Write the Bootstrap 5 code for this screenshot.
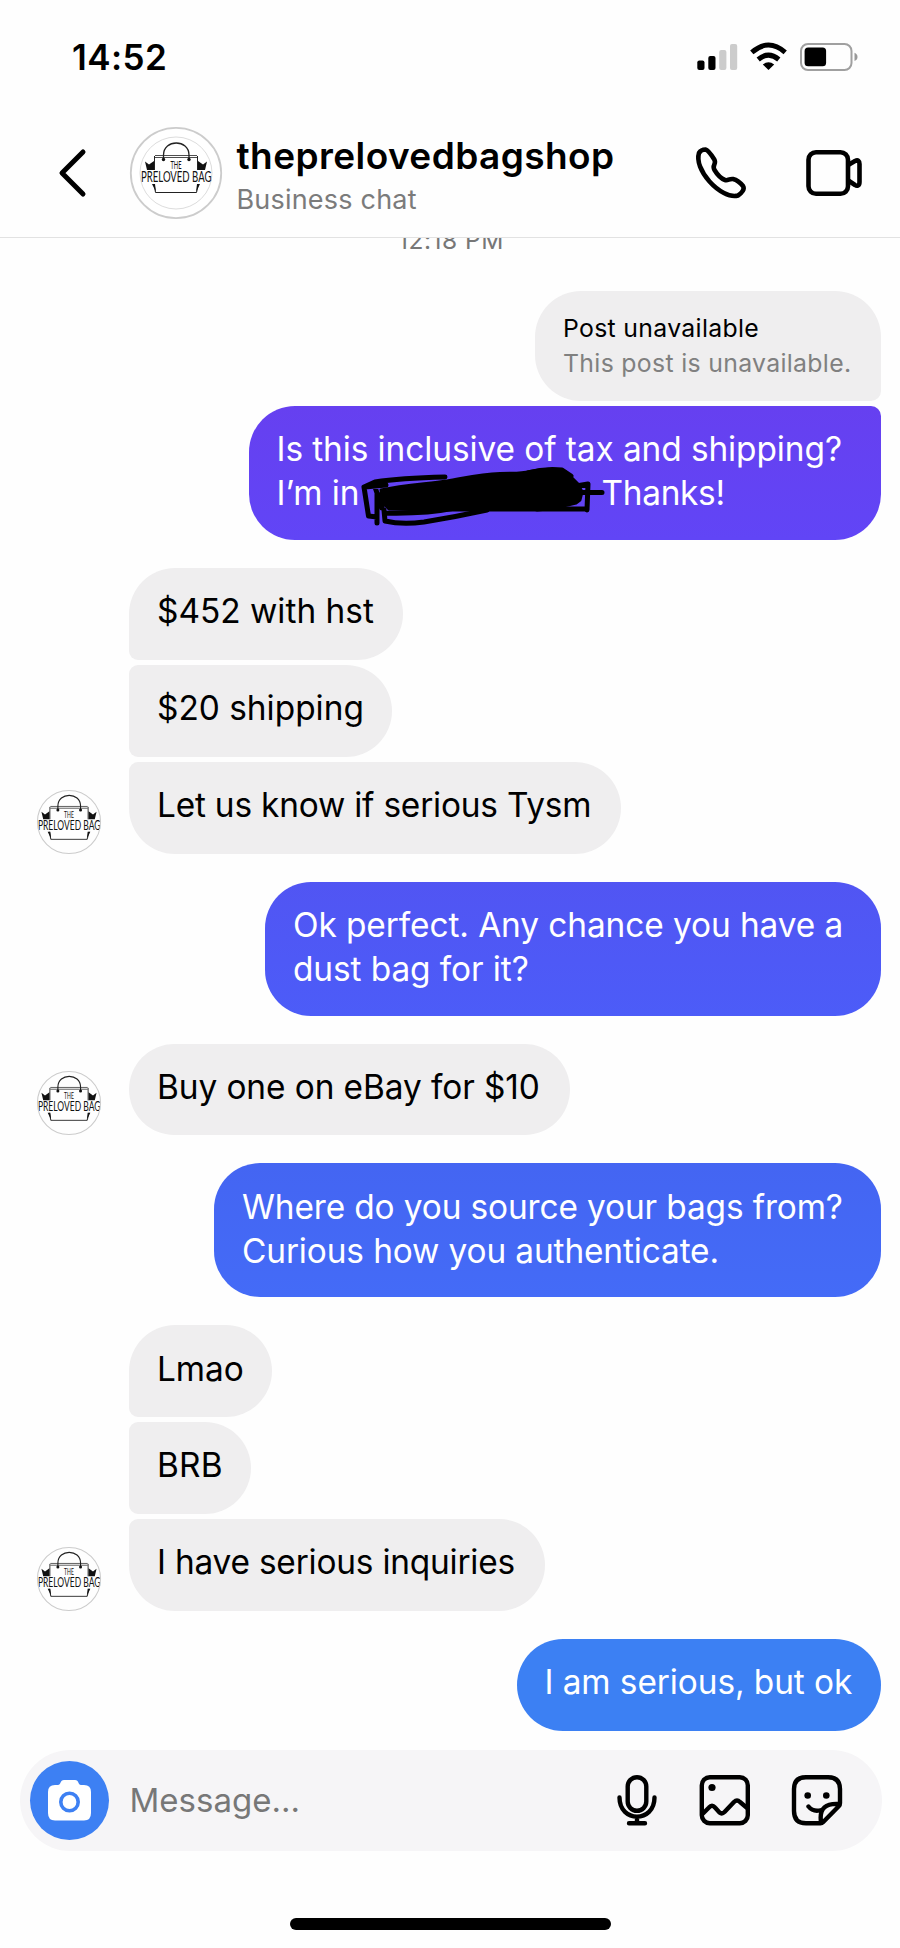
<!DOCTYPE html>
<html lang="en">
<head>
<meta charset="utf-8">
<meta name="viewport" content="width=device-width, initial-scale=1">
<title>Business chat</title>
<link rel="stylesheet" href="https://cdn.jsdelivr.net/npm/bootstrap@5.3.0/dist/css/bootstrap.min.css">
<style>
  body { width: 900px; height: 1948px; background: #fefefe; color: #000; font-family: Inter, "Liberation Sans", sans-serif; overflow: hidden; }
  svg { display: block; flex: none; overflow: visible; }
  .statusbar { height: 110px; padding: 36px 42px 0 72px; }
  .status-icons { margin-top: 3px; }
  .clock { font-size: 35px; font-weight: 600; line-height: 42px; letter-spacing: .4px; }
  .chat-head { height: 128px; padding: 17px 38px 0 58px; border-bottom: 1.5px solid #e2e2e2; }
  .shop { padding: 7px 0 0 15px; }
  .shop-name { font-size: 37px; font-weight: 600; line-height: 44px; letter-spacing: .42px; }
  .shop-sub { font-size: 27px; line-height: 32px; color: #7b7b7b; margin-top: 6px; letter-spacing: .2px; }
  .stamp-clip { height: 53px; overflow: hidden; }
  .stamp { font-size: 24.500px; line-height: 30px; margin-top: -13.500px; padding-left: 2px; color: #777; letter-spacing: .5px; }
  .thread { padding-right: 19px; }
  .bubble { font-size: 33.400px; line-height: 44px; letter-spacing: -.08px; padding: 21.200px 0 0 28px; height: 91.850px; border-radius: 46px; background: #efeeef; white-space: nowrap; }
  .two { height: 134px; }
  .me { align-self: flex-end; color: #fff; }
  .first { border-bottom-left-radius: 9px; }
  .mid { border-top-left-radius: 9px; border-bottom-left-radius: 9px; }
  .last { border-top-left-radius: 9px; }
  .turn { margin-top: 28px; }
  .them { padding-left: 129px; gap: 5px; }
  .them-row { margin-left: -92px; gap: 28px; }
  .post { width: 346px; height: 110px; font-size: 24.800px; letter-spacing: .32px; line-height: 35px; padding: 20px 0 0 28px; border-bottom-right-radius: 10px; }
  .post-note { color: #808080; }
  .q-tax { width: 632.500px; margin-top: 5px; background: linear-gradient(#6640f0, #6145f6); border-top-right-radius: 10px; }
  .thanks { left: 353px; letter-spacing: -.3px; }
  .scribble { left: 111px; top: 59px; }
  .q-dust { width: 616px; background: linear-gradient(#5155f3, #4c5cf8); }
  .q-source { width: 667px; background: linear-gradient(#4465f2, #446bf7); letter-spacing: -.12px; }
  .a-ok { width: 364.500px; background: #3c80f3; }
  .a-price { width: 274px; letter-spacing: 0; }
  .a-ship { width: 262.500px; letter-spacing: 0; }
  .a-tysm { width: 491.500px; letter-spacing: -.2px; }
  .a-ebay { width: 441px; }
  .a-lmao { width: 143px; }
  .a-brb { width: 121.500px; letter-spacing: .2px; }
  .a-inq { width: 415.500px; letter-spacing: -.2px; }
  .composer { margin: 19px 18.500px 0 20px; height: 101px; border-radius: 51px; background: #f6f5f7; padding: 0 38.500px 0 9.500px; }
  .composer-tools { margin-top: -1px; }
  .cam { width: 79px; height: 79px; background: #3d80f3; }
  .placeholder-text { font-size: 33px; color: #777; padding-left: 21px; }
  .homebar { width: 321px; height: 12px; margin-top: 67px; }
</style>
</head>
<body>
<svg width="0" height="0" class="position-absolute">
  <defs>
    <g id="bag" fill="none" stroke="#222">
      <path d="M-12.500-14V-18C-12.500-34 13-34 13-18V-14" stroke-width="1.300"/>
      <path d="M-21-17.500H21M-21-15.500H21" stroke-width=".8"/>
      <path d="M-21.500-17V-3M21.500-17V-3M-22 11L-20.500 19.500H20.500L22.500 11" stroke-width="1"/>
      <g fill="#111" stroke="none">
        <circle cx="-12.500" cy="-13.500" r="1.700"/><circle cx="13" cy="-13.500" r="1.700"/>
        <path d="M-31-11.500L-27-8.500L-22-12V-3H-29ZM31-11.500L27-8.500L22-12V-3H29ZM-24 11H-21L-20 19ZM24 11H21L20 19Z"/>
        <text x="-5.500" y="-4.500" font-size="11" textLength="11" lengthAdjust="spacingAndGlyphs" font-family="Lato">THE</text>
        <text x="-35" y="9" font-size="14.500" textLength="70.500" lengthAdjust="spacingAndGlyphs" font-family="Lato">PRELOVED BAG</text>
      </g>
    </g>
    <clipPath id="round"><circle cx="0" cy="0" r="36"/></clipPath>
    <g id="avatar"><g clip-path="url(#round)"><use href="#bag"/></g><circle r="35.500" fill="none" stroke="#ccc" stroke-width="1.200"/></g>
  </defs>
</svg>

<div class="statusbar d-flex justify-content-between">
  <div class="clock">14:52</div>
  <svg class="status-icons" width="161" height="32" viewBox="697 39 161 32">
    <rect x="697.300" y="60.500" width="7.200" height="9.500" rx="2"/><rect x="708.300" y="56" width="7.200" height="14" rx="2"/>
    <rect x="719.200" y="50" width="7.200" height="20" rx="2" fill="#ccc"/><rect x="730" y="44" width="7.200" height="26" rx="2" fill="#ccc"/>
    <g fill="none" stroke="#000" stroke-width="5"><path d="M751.800 52.300Q768.500 37.700 785.200 52.300"/><path d="M758.200 59.500Q768.500 50.800 778.800 59.500"/></g>
    <path d="M762.800 64.500Q768.500 60 774.200 64.500L768.500 70Z"/>
    <rect x="801" y="44" width="50.500" height="26" rx="7" fill="none" stroke="#a0a0a0" stroke-width="2"/>
    <rect x="804.600" y="47.600" width="21.500" height="18.600" rx="3.500"/>
    <path d="M854.500 52.800C858.500 54 858.500 60 854.500 61Z" fill="#999"/>
  </svg>
</div>

<header class="chat-head d-flex align-items-start">
  <svg width="71.500" height="92" viewBox="58 127 71.500 92"><path d="M83 152L62 173L83 194" fill="none" stroke="#000" stroke-width="5" stroke-linecap="round" stroke-linejoin="round"/></svg>
  <svg width="92" height="92" viewBox="-46 -46 92 92"><circle r="45.200" fill="#fff" stroke="#ccc" stroke-width="1.800"/><circle r="36" fill="none" stroke="#ddd"/><use href="#bag"/></svg>
  <div class="shop flex-grow-1">
    <div class="shop-name">theprelovedbagshop</div>
    <div class="shop-sub">Business chat</div>
  </div>
  <svg width="166" height="92" viewBox="696 127 166 92" fill="none" stroke="#000" stroke-width="4.600" stroke-linejoin="round" stroke-linecap="round">
    <path d="M699 153Q701 149.500 705.500 149.500C708 150 711.500 155 714.300 159.500C717 164 711.500 165 714.500 170C717.500 175 721 178.500 725 180C728 181 729 178.500 733 179C737 180 741 183.500 743 186C745 189 742 193 738 195.500C730 198 718 191 709.500 181.500C701 172 696.500 161 699 153Z"/>
    <rect x="808.500" y="152.300" width="39.500" height="41.500" rx="7.500"/>
    <path d="M849 164.500L855 161C858 159.500 859.500 161 859.500 164V182C859.500 186 857 186.500 855 185L849 181"/>
  </svg>
</header>

<div class="stamp-clip text-center"><div class="stamp">12:18 PM</div></div>

<main class="thread d-flex flex-column">
  <div class="bubble me post"><div class="text-black">Post unavailable</div><div class="post-note">This post is unavailable.</div></div>
  <div class="bubble two me q-tax position-relative">
    Is this inclusive of tax and shipping?<br>I’m in<span class="thanks position-absolute">Thanks!</span>
    <svg class="scribble position-absolute" width="250" height="65" viewBox="360 465 250 65" fill="none" stroke="#000" stroke-width="5" stroke-linecap="round" stroke-linejoin="round">
      <path fill="#000" stroke-width="3" d="M381 490C405 485 427 484 447 481C465 478 480 474 500 473.500C515 473 520 474 530 471.500C542 469 556 468.500 562 470C567 472 569 475 571 477L578 484L582 492L580 500L576 503C560 507 550 509 537 510H487L450 510L430 510L389 509L384 504Z"/>
      <path d="M364 487L375 482Q400 478 445 477M364 487L368.500 516L377 517M365 487L386 485M374 484L377 493V523M382 493V508M384 510L385 521Q402 525 424 522Q455 517 487 510M385 513Q425 514 455 508M528 473Q545 468 562 470L571 476M576 486L588 484L587 510M537 509H587M581 492.600H602"/>
    </svg>
  </div>

  <div class="them turn d-flex flex-column align-items-start">
    <div class="bubble first a-price">$452 with hst</div>
    <div class="bubble mid a-ship">$20 shipping</div>
    <div class="them-row d-flex align-items-end"><svg width="64" height="64" viewBox="-36 -36 72 72"><use href="#avatar"/></svg><div class="bubble last a-tysm">Let us know if serious Tysm</div></div>
  </div>

  <div class="bubble two me turn q-dust">Ok perfect. Any chance you have a<br>dust bag for it?</div>

  <div class="them turn d-flex flex-column align-items-start">
    <div class="them-row d-flex align-items-end"><svg width="64" height="64" viewBox="-36 -36 72 72"><use href="#avatar"/></svg><div class="bubble a-ebay">Buy one on eBay for $10</div></div>
  </div>

  <div class="bubble two me turn q-source">Where do you source your bags from?<br>Curious how you authenticate.</div>

  <div class="them turn d-flex flex-column align-items-start">
    <div class="bubble first a-lmao">Lmao</div>
    <div class="bubble mid a-brb">BRB</div>
    <div class="them-row d-flex align-items-end"><svg width="64" height="64" viewBox="-36 -36 72 72"><use href="#avatar"/></svg><div class="bubble last a-inq">I have serious inquiries</div></div>
  </div>

  <div class="bubble me turn a-ok">I am serious, but ok</div>
</main>

<footer>
  <div class="composer d-flex align-items-center">
    <div class="cam rounded-circle d-flex align-items-center justify-content-center">
      <svg width="43" height="41" viewBox="0 0 43 41"><path fill="#fff" d="M7 5H10C13 5 12 0 16 0H27C31 0 30 5 33 5H36Q43 5 43 12V33Q43 40.500 36 40.500H7Q0 40.500 0 33V12Q0 5 7 5Z"/><circle cx="21.500" cy="22" r="8.700" fill="#fff" stroke="#3d80f3" stroke-width="3.600"/></svg>
    </div>
    <div class="placeholder-text flex-grow-1">Message...</div>
    <svg class="composer-tools" width="226" height="52" viewBox="617 1774 226 52" fill="none" stroke="#000" stroke-width="4.400" stroke-linecap="round" stroke-linejoin="round">
      <rect x="627.700" y="1777.200" width="18.600" height="33.600" rx="9.300"/><path d="M619.500 1797.500C619.500 1823 654.500 1823 654.500 1797.500M637 1818V1822.500M629 1823.300H645"/>
      <rect x="701.800" y="1777.200" width="46" height="46" rx="8"/><circle cx="712" cy="1787.500" r="3.600" fill="#000" stroke="none"/><path d="M703 1813.500L709 1807.500Q712 1804 715 1807.500L719.500 1812.500Q722 1814.500 724.500 1812L734 1802Q737 1799 740 1802L746.500 1807.500"/>
      <path d="M840 1803V1789Q840 1777.200 828 1777.200H806Q794 1777.200 794 1789V1811Q794 1823.300 806 1823.300H820.500Q822 1823.300 823 1822.300L839 1806Q840 1805 840 1803ZM821 1822C819 1808 826 1803 839.500 1804M808.500 1806.500C812 1811 816 1811.500 821.500 1810"/><circle cx="807.700" cy="1795.500" r="3.300" fill="#000" stroke="none"/><circle cx="826.300" cy="1795.500" r="3.300" fill="#000" stroke="none"/>
    </svg>
  </div>
  <div class="homebar bg-black rounded-pill mx-auto"></div>
</footer>
<script src="https://cdn.jsdelivr.net/npm/bootstrap@5.3.0/dist/js/bootstrap.bundle.min.js"></script>
</body>
</html>
